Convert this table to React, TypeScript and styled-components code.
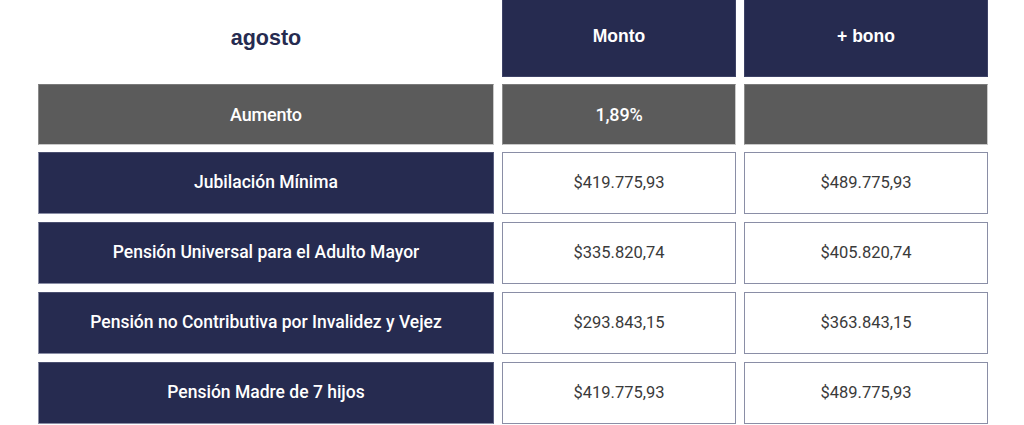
import React from "react";
import styled, { createGlobalStyle } from "styled-components";

const Global = createGlobalStyle`
  html, body { margin: 0; padding: 0; background: #ffffff; }
  body { font-family: Roboto, "Noto Sans", sans-serif; }
`;

const NAVY = "#262b50";
const GREY = "#5b5b5b";
const EDGE = "#8a8ea6";

const Table = styled.div`
  display: grid;
  grid-template-columns: 456px 234px 244px;
  column-gap: 8px;
  margin-left: 38px;
  width: 950px;
`;

const Row = styled.div<{ $h: number; $after: number }>`
  display: contents;
  & > * {
    height: ${(p) => p.$h}px;
    margin-bottom: ${(p) => p.$after}px;
  }
`;

type Kind = "title" | "head" | "grey" | "label" | "value";

const Cell = styled.div<{ $kind: Kind }>`
  box-sizing: border-box;
  display: flex;
  align-items: center;
  justify-content: center;
  text-align: center;
  white-space: nowrap;
  ${(p) => {
    switch (p.$kind) {
      case "title":
        return `
          background: #ffffff;
          color: ${NAVY};
          font-family: "Liberation Sans", Arial, sans-serif;
          font-weight: 700;
          font-size: 21.5px;
          padding-bottom: 1px;
        `;
      case "head":
        return `
          background: ${NAVY};
          color: #ffffff;
          font-family: "Liberation Sans", Arial, sans-serif;
          font-weight: 700;
          font-size: 17.5px;
          border: 1px solid #3d4266;
          border-top: none;
          padding-bottom: 3px;
        `;
      case "grey":
        return `
          background: ${GREY};
          color: #ffffff;
          font-weight: 500;
          font-size: 18px;
          letter-spacing: -0.2px;
          border: 1px solid #c9c9c9;
          border-top-color: #7a7a7a;
          border-left-color: #8a8a8a;
        `;
      case "label":
        return `
          background: ${NAVY};
          color: #ffffff;
          font-weight: 500;
          font-size: 17.5px;
          letter-spacing: 0;
          border: 1px solid ${EDGE};
          border-top-color: #4a4f70;
          border-right-color: #5a5f80;
          padding-bottom: 2px;
        `;
      case "value":
        return `
          background: #ffffff;
          color: #3a3a3a;
          font-weight: 400;
          font-size: 16.5px;
          letter-spacing: 0;
          border: 1px solid ${EDGE};
          padding-bottom: 2px;
        `;
    }
  }}
`;

const rows = [
  ["Jubilación Mínima", "$419.775,93", "$489.775,93"],
  ["Pensión Universal para el Adulto Mayor", "$335.820,74", "$405.820,74"],
  ["Pensión no Contributiva por Invalidez y Vejez", "$293.843,15", "$363.843,15"],
  ["Pensión Madre de 7 hijos", "$419.775,93", "$489.775,93"],
];

export default function App() {
  return (
    <>
      <Global />
      <Table>
        <Row $h={77} $after={7}>
          <Cell $kind="title">agosto</Cell>
          <Cell $kind="head">Monto</Cell>
          <Cell $kind="head">+ bono</Cell>
        </Row>
        <Row $h={61} $after={7}>
          <Cell $kind="grey">Aumento</Cell>
          <Cell $kind="grey">1,89%</Cell>
          <Cell $kind="grey" />
        </Row>
        {rows.map((r) => (
          <Row key={r[0]} $h={62} $after={8}>
            <Cell $kind="label">{r[0]}</Cell>
            <Cell $kind="value">{r[1]}</Cell>
            <Cell $kind="value">{r[2]}</Cell>
          </Row>
        ))}
      </Table>
    </>
  );
}
